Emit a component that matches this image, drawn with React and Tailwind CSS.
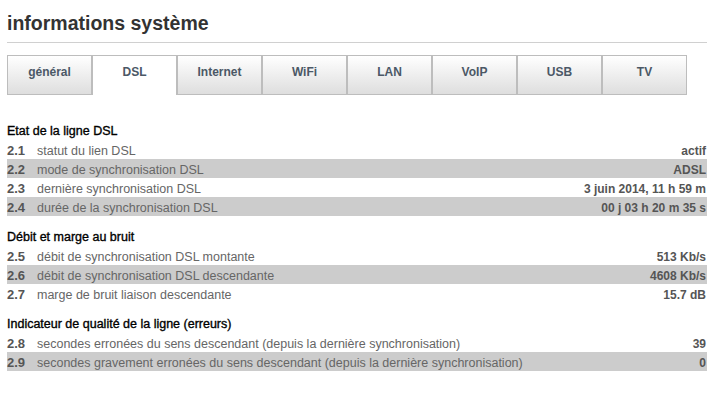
import React from "react";

const tabs = ["général", "DSL", "Internet", "WiFi", "LAN", "VoIP", "USB", "TV"];

const sections = [
  {
    title: "Etat de la ligne DSL",
    rows: [
      ["2.1", "statut du lien DSL", "actif"],
      ["2.2", "mode de synchronisation DSL", "ADSL"],
      ["2.3", "dernière synchronisation DSL", "3 juin 2014, 11 h 59 m"],
      ["2.4", "durée de la synchronisation DSL", "00 j 03 h 20 m 35 s"],
    ],
  },
  {
    title: "Débit et marge au bruit",
    rows: [
      ["2.5", "débit de synchronisation DSL montante", "513 Kb/s"],
      ["2.6", "débit de synchronisation DSL descendante", "4608 Kb/s"],
      ["2.7", "marge de bruit liaison descendante", "15.7 dB"],
    ],
  },
  {
    title: "Indicateur de qualité de la ligne (erreurs)",
    rows: [
      ["2.8", "secondes erronées du sens descendant (depuis la dernière synchronisation)", "39"],
      ["2.9", "secondes gravement erronées du sens descendant (depuis la dernière synchronisation)", "0"],
    ],
  },
];

const App = () => {
  return (
    <div className="min-h-screen bg-white font-['Liberation_Sans',Arial,sans-serif]">
      <div className="ml-[7px] w-[700px]">
        <h1 className="pt-[11px] pb-[7px] text-[19.5px] leading-[24px] font-bold text-[#333] border-b border-[#d0d0d0]">
          informations système
        </h1>

        <div className="mt-[12px] flex">
          {tabs.map((tab) =>
            tab === "DSL" ? (
              <div key={tab} className="w-[85px] h-[40px] border border-b-0 border-[#bdbdbd] bg-white flex items-center justify-center text-[12px] font-bold text-[#4b5866] pb-[7px]">
                {tab}
              </div>
            ) : (
              <div key={tab} className="w-[85px] h-[40px] border border-[#bdbdbd] bg-gradient-to-b from-white to-[#dedede] flex items-center justify-center text-[12px] font-bold text-[#4b5866] pb-[7px]">
                {tab}
              </div>
            )
          )}
        </div>

        <div className="mt-[26px]">
          {sections.map((section, i) => (
            <div key={section.title} className={i > 0 ? "mt-[11px]" : ""}>
              <div className="h-[19px] leading-[19px] pt-[1px] text-[12.5px] text-black [-webkit-text-stroke:0.35px_black]">{section.title}</div>
              {section.rows.map(([num, label, value], j) => (
                <div key={num} className={"h-[19px] leading-[19px] flex items-baseline pt-[1px] " + (j % 2 === 1 ? "bg-[#cccccc]" : "")}>
                  <span className="w-[30px] text-[13px] font-bold text-[#555]">{num}</span>
                  <span className="flex-1 text-[12.5px] text-[#666]">{label}</span>
                  <span className="text-[12px] font-bold text-[#555] pr-[1px]">{value}</span>
                </div>
              ))}
            </div>
          ))}
        </div>
      </div>
    </div>
  );
};

export default App;
